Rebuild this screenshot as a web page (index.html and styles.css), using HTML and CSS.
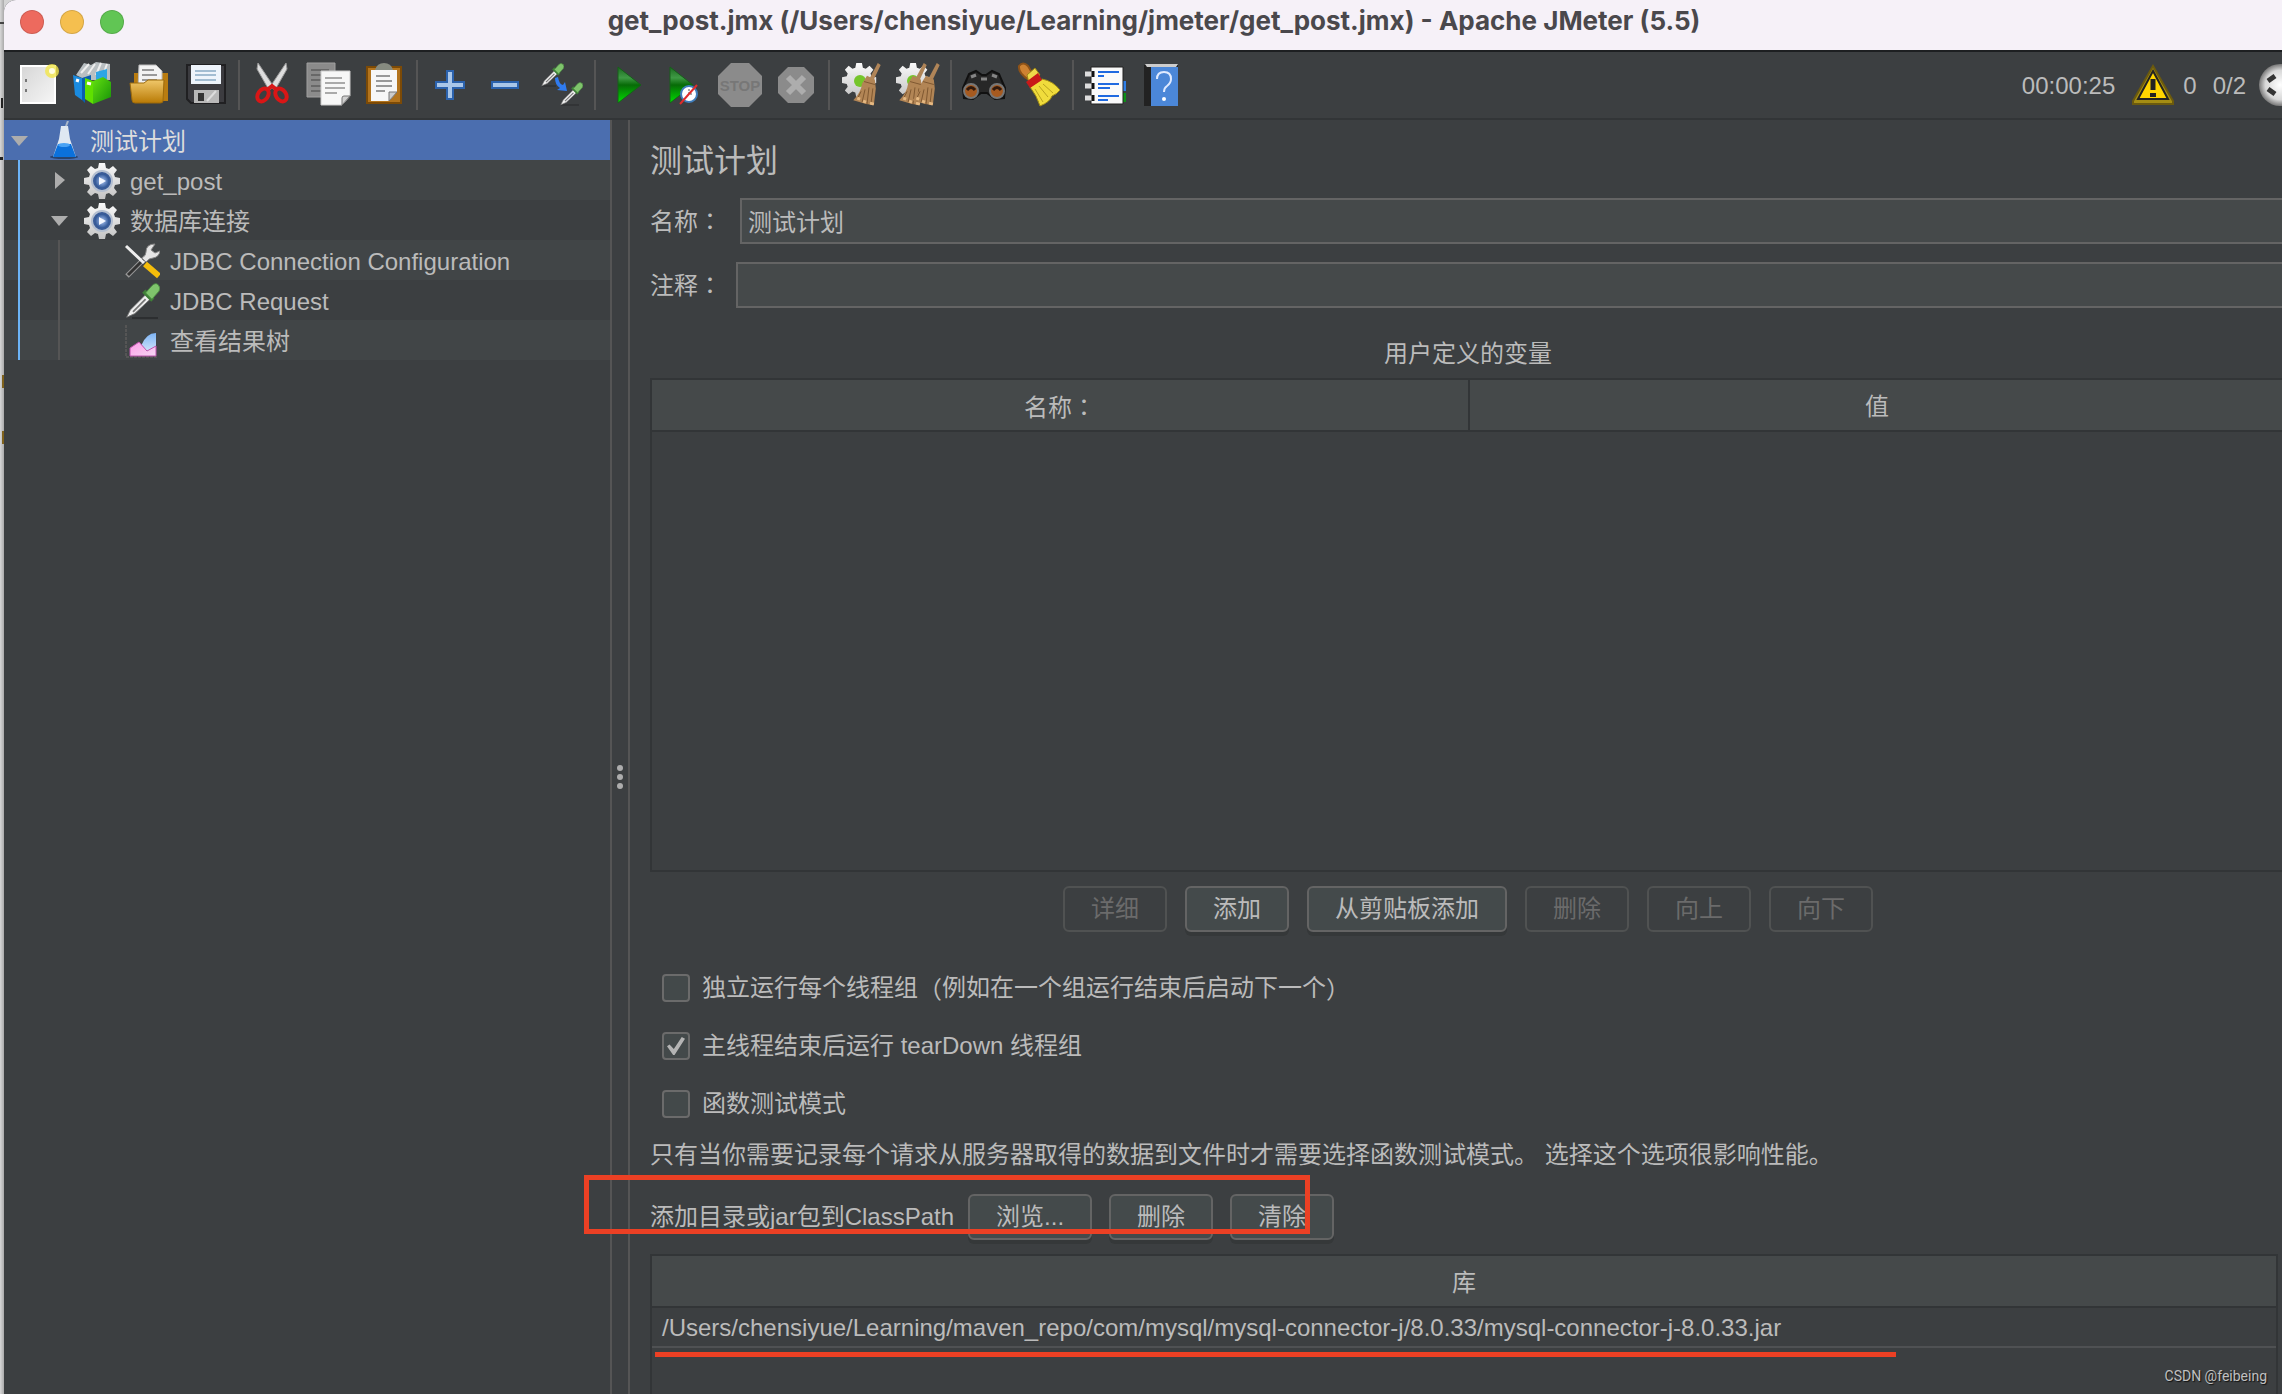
FILE: index.html
```html
<!DOCTYPE html>
<html lang="zh-CN">
<head>
<meta charset="utf-8">
<title>get_post.jmx - Apache JMeter (5.5)</title>
<link rel="stylesheet" href="styles.css">
</head>
<body>
<svg class="defs" width="0" height="0" aria-hidden="true">
  <defs>
    <linearGradient id="gGold" x1="0" y1="0" x2="0" y2="1"><stop offset="0" stop-color="#f0c86a"/><stop offset="1" stop-color="#b97a05"/></linearGradient>
    <linearGradient id="gPaper" x1="0" y1="0" x2="1" y2="1"><stop offset="0" stop-color="#d6d6d6"/><stop offset="1" stop-color="#f6f6f6"/></linearGradient>
    <linearGradient id="gPlay" x1="0" y1="0" x2="0" y2="1"><stop offset="0" stop-color="#1c6a20"/><stop offset=".3" stop-color="#3f9a45"/><stop offset=".5" stop-color="#076b07"/><stop offset="1" stop-color="#00e000"/></linearGradient>
    <linearGradient id="gGreen" x1="0" y1="0" x2="1" y2="1"><stop offset="0" stop-color="#63e010"/><stop offset="1" stop-color="#169208"/></linearGradient>
    <radialGradient id="gBlue"><stop offset="0" stop-color="#e8f0ff"/><stop offset=".35" stop-color="#7c9bd0"/><stop offset="1" stop-color="#1f4788"/></radialGradient>
    <radialGradient id="gBall"><stop offset="0" stop-color="#fff"/><stop offset=".7" stop-color="#d8d8d8"/><stop offset="1" stop-color="#777"/></radialGradient>
    <linearGradient id="gMetal" x1="0" y1="0" x2="0" y2="1"><stop offset="0" stop-color="#fafafa"/><stop offset="1" stop-color="#c4c4c4"/></linearGradient>
    <linearGradient id="gPink" x1="0" y1="0" x2="1" y2="1"><stop offset="0" stop-color="#ff9be8"/><stop offset="1" stop-color="#f5d8f4"/></linearGradient>
    <linearGradient id="gSky" x1="0" y1="0" x2="0" y2="1"><stop offset="0" stop-color="#7db4f5"/><stop offset="1" stop-color="#e4effb"/></linearGradient>
    <g id="gearShape">
      <path d="M15 0h6l1 5 3 1 4-3 4 4-3 4 1 3 5 1v6l-5 1-1 3 3 4-4 4-4-3-3 1-1 5h-6l-1-5-3-1-4 3-4-4 3-4-1-3-5-1v-6l5-1 1-3-3-4 4-4 4 3 3-1z" fill="url(#gMetal)"/>
    </g>
    <symbol id="gear" viewBox="0 0 36 36"><use href="#gearShape"/><circle cx="18" cy="18" r="11" fill="#b4bfd0"/><circle cx="18" cy="18" r="8" fill="url(#gBlue)" stroke="#3a5c98" stroke-width="2"/><path d="M15 14l7 4-7 4z" fill="#f4f7ff"/></symbol>
    <symbol id="pipette" viewBox="0 0 40 40"><path d="M3 38L7 30 24 13 29 18 12 34Z" fill="#f0f0f0" stroke="#777" stroke-width="1"/><path d="M10 32L24 18" stroke="#777" stroke-width="2"/><path d="M22 9l10 10" stroke="#3f7e38" stroke-width="5"/><path d="M24 11L31 3q4-4 7-1t1 7L31 18z" fill="#7fc46c" stroke="#4b8e42"/></symbol>
    <symbol id="broom" viewBox="0 0 30 46"><path d="M26 1l3 2-7 15-4-2z" fill="#b08558"/><path d="M15 14l8 4 1 9-2 17-8-1-13-4q8-8 9-17z" fill="#b28555"/><path d="M12 20l11 3M9 30L5 38M13 28l-3 13M17 26l-2 17M21 27l-2 16" stroke="#7e5730" stroke-width="1" fill="none"/><path d="M5 37l3 1M11 40l3 1M18 42l4 1" stroke="#e6b982" stroke-width="3"/></symbol>
  </defs>
</svg>

<div class="desktop">
  <div class="behind"></div>
  <div class="window">
    <header class="titlebar">
      <div class="lights"><i class="light red"></i><i class="light yellow"></i><i class="light green"></i></div>
      <h1>get_post.jmx (/Users/chensiyue/Learning/jmeter/get_post.jmx) - Apache JMeter (5.5)</h1>
    </header>

    <nav class="toolbar" aria-label="工具栏">
      <button class="tool" aria-label="新建"><svg width="44" height="48" viewBox="0 0 44 48"><path d="M5 5h34v37H5z" fill="url(#gPaper)" stroke="#fff" stroke-width="2"/><path d="M10 18v3M10 28v3" stroke="#777" stroke-width="2"/><circle cx="36" cy="10" r="7" fill="#f2e64a" opacity=".8"/><circle cx="36" cy="10" r="3" fill="#fffde0"/></svg></button>
      <button class="tool" aria-label="模板"><svg width="44" height="48" viewBox="0 0 44 48"><path d="M4 14L12 2l7 2 5-3 14 2v16H14z" fill="#b9bfc2"/><path d="M9 12l8-9M16 13l7-10M24 14l5-12M31 14l4-11" stroke="#eee" stroke-width="2"/><path d="M1 14l9 3v22l-7-5z" fill="#1a8be0"/><path d="M10 17l9-3v6l-6-2v24l-3-3z" fill="#0a5fae"/><path d="M24 11l11-3v10l-11 2z" fill="#2da6e6"/><path d="M13 17l8 3v23l-8-5z" fill="#5fe000"/><path d="M21 20l10-4 8 5v15l-18 7z" fill="url(#gGreen)"/><path d="M4 19l3 1M15 22l4 1" stroke="#fff" stroke-width="3"/></svg></button>
      <button class="tool" aria-label="打开"><svg width="44" height="48" viewBox="0 0 44 48"><path d="M6 12h34v28H6z" fill="#b97c10"/><path d="M11 4h17l6 6v18H10z" fill="#f3f3f3" stroke="#bbb"/><path d="M14 9h12M14 14h15M14 19h15" stroke="#999" stroke-width="2"/><path d="M2 22h14l4-3h16l-1 21q0 2-3 2H7q-3 0-3-3z" fill="url(#gGold)" stroke="#9c6a0b"/></svg></button>
      <button class="tool" aria-label="保存"><svg width="44" height="48" viewBox="0 0 44 48"><path d="M3 4h38v38H7l-4-4z" fill="#3c3c40" stroke="#202022" stroke-width="2"/><path d="M7 4h30v19H7z" fill="#eef4fb"/><path d="M11 10h21M11 14h21M11 19h21" stroke="#a3bdd2" stroke-width="2"/><path d="M10 29h25v13H10z" fill="#b9b9b9"/><path d="M14 32h6v8h-6z" fill="#333"/><path d="M23 40l9-10" stroke="#ddd" stroke-width="2"/></svg></button>
      <span class="sep"></span>
      <button class="tool" aria-label="剪切"><svg width="44" height="48" viewBox="0 0 44 48"><path d="M8 2l16 24-5 3L7 8zM36 2L20 26l5 3L37 8z" fill="#dedede" stroke="#999"/><path d="M17 29l5-4 5 4" fill="none" stroke="#d81818" stroke-width="4"/><ellipse cx="13" cy="34" rx="5" ry="7" transform="rotate(35 13 34)" fill="none" stroke="#d91616" stroke-width="4"/><ellipse cx="31" cy="34" rx="5" ry="7" transform="rotate(-35 31 34)" fill="none" stroke="#d91616" stroke-width="4"/></svg></button>
      <button class="tool" aria-label="复制"><svg width="48" height="48" viewBox="0 0 48 48"><path d="M3 2h28v34H3z" fill="#8b8b8b" stroke="#a0a0a0"/><path d="M7 9h18M7 14h18M7 19h12M7 25h12M7 30h10" stroke="#686868" stroke-width="2"/><path d="M17 10h29v25l-8 9H17z" fill="#f7f7f7" stroke="#ccc"/><path d="M46 35l-8 9v-7q0-2 2-2z" fill="#d0d0d0" stroke="#777"/><path d="M21 17h17M21 22h20M21 27h20M21 32h12" stroke="#aaa" stroke-width="2"/></svg></button>
      <button class="tool" aria-label="粘贴"><svg width="44" height="48" viewBox="0 0 44 48"><path d="M5 6h34v36H5z" fill="#b3741d" stroke="#7c4a06" stroke-width="2"/><path d="M9 9h26v22l-8 9H9z" fill="#f7f7f7"/><path d="M35 31l-8 9v-9z" fill="#ccc" stroke="#777"/><path d="M13 9q2-7 9-7t9 7z" fill="#868b80"/><path d="M14 15h14M14 20h16M14 25h16M14 30h9" stroke="#999" stroke-width="2"/></svg></button>
      <span class="sep"></span>
      <button class="tool" aria-label="展开全部"><svg width="44" height="48" viewBox="0 0 44 48"><path d="M19 10h6v11h11v6H25v11h-6V27H8v-6h11z" fill="#a9c6e8" stroke="#2b62ad" stroke-width="2"/></svg></button>
      <button class="tool" aria-label="折叠全部"><svg width="44" height="48" viewBox="0 0 44 48"><path d="M8 21h26v6H8z" fill="#a9c6e8" stroke="#2b62ad" stroke-width="2"/></svg></button>
      <button class="tool" aria-label="切换"><svg width="46" height="48" viewBox="0 0 46 48"><path d="M3 25h14M22 44h18" stroke="#292b2c" stroke-width="1"/><use href="#pipette" x="1" y="2" width="24" height="24"/><use href="#pipette" x="20" y="21" width="24" height="24"/><path d="M16 17l3-1q1 7 5 8l2-3 2 9-10-1 3-2q-5-3-5-10z" fill="#2f7bf0"/></svg></button>
      <span class="sep"></span>
      <button class="tool" aria-label="启动"><svg width="44" height="48" viewBox="0 0 44 48"><path d="M12 6l23 18-23 18z" fill="url(#gPlay)" stroke="#16601a"/></svg></button>
      <button class="tool" aria-label="不停顿开始"><svg width="44" height="48" viewBox="0 0 44 48"><path d="M8 6l23 18L8 42z" fill="url(#gPlay)" stroke="#16601a"/><circle cx="27" cy="33" r="8" fill="#fff" stroke="#3f7dbb" stroke-width="2"/><path d="M27 28v5h4" stroke="#555" fill="none" stroke-dasharray="2 1"/><path d="M18 43l17-19" stroke="#e02c2c" stroke-width="2"/></svg></button>
      <button class="tool" aria-label="停止" disabled><svg width="44" height="48" viewBox="0 0 44 48"><path d="M13 2h18l13 13v18L31 46H13L0 33V15z" fill="#8b8b8b"/><text x="22" y="30" class="stop">STOP</text></svg></button>
      <button class="tool" aria-label="关闭" disabled><svg width="44" height="48" viewBox="0 0 44 48"><path d="M14 6h16l10 10v16L30 42H14L4 32V16z" fill="#8b8b8b"/><path d="M14 16l16 16M30 16L14 32" stroke="#adadad" stroke-width="6"/></svg></button>
      <span class="sep"></span>
      <button class="tool" aria-label="清除"><svg width="46" height="48" viewBox="0 0 46 48"><use href="#gearShape" transform="translate(3 2) scale(.95)"/><circle cx="21" cy="20" r="6" fill="#75c52a"/><use href="#broom" x="13" y="1" width="30" height="45"/></svg></button>
      <button class="tool" aria-label="清除全部"><svg width="46" height="48" viewBox="0 0 46 48"><use href="#gearShape" transform="translate(1 2) scale(.95)"/><circle cx="18" cy="20" r="6" fill="#75c52a"/><use href="#broom" x="3" y="1" width="30" height="45"/><use href="#broom" x="16" y="1" width="30" height="45"/></svg></button>
      <span class="sep"></span>
      <button class="tool" aria-label="查找"><svg width="46" height="48" viewBox="0 0 46 48"><path d="M8 13l7-3 6 4h4l6-4 7 3 6 14-1 10-9 1-8-6h-6l-8 6-9-1-1-10z" fill="#272727" stroke="#111" stroke-width="2"/><path d="M10 16l5-2M31 14l5 2M20 18h6" stroke="#858585" stroke-width="3"/><circle cx="10" cy="30" r="7" fill="#a65a20" stroke="#777" stroke-width="2"/><circle cx="36" cy="30" r="7" fill="#a65a20" stroke="#777" stroke-width="2"/><path d="M6 29q4-5 8 0M32 29q4-5 8 0" stroke="#31190c" stroke-width="3" fill="none"/></svg></button>
      <button class="tool" aria-label="清除查找"><svg width="46" height="48" viewBox="0 0 46 48"><path d="M2 5q4-5 9 0l6 10-5 4Q1 12 2 5z" fill="#ce8232" stroke="#8d5218" stroke-width="2"/><path d="M10 14l8-7 5 7-11 8z" fill="#efd94a" stroke="#9c8614"/><path d="M13 26l12-8q11 2 18 11-3 4-8 6-2 6-12 10-3-10-10-19z" fill="#f0dc3c" stroke="#a08c16"/><path d="M9 21l12-9 4 7-12 8z" fill="#c81919"/><path d="M18 28l8 13M22 25l9 11M26 23l10 9" stroke="#b9a31f" stroke-width="1"/></svg></button>
      <span class="sep"></span>
      <button class="tool" aria-label="函数助手"><svg width="46" height="48" viewBox="0 0 46 48"><path d="M38 20h5v10h-5z" fill="#2f7fe8"/><path d="M38 32h5v9h-5z" fill="#0c8f17"/><path d="M8 6h32v37H8z" fill="#f9f9f9" stroke="#222"/><path d="M15 11h21M15 15h6M15 23h21M15 27h12M15 35h21M15 39h10" stroke="#1e69e0" stroke-width="2"/><path d="M2 13h7M2 25h7M2 37h7" stroke="#ddd" stroke-width="5"/><path d="M10 10v6M10 22v6M10 34v6" stroke="#111" stroke-width="3"/></svg></button>
      <button class="tool" aria-label="帮助"><svg width="44" height="48" viewBox="0 0 44 48"><path d="M4 4h34v41H4z" fill="#222"/><path d="M5 3h33l-2 3H7z" fill="#ccc"/><path d="M11 6h27v39H11z" fill="#4b87d8"/><path d="M17 18q0-7 7-7t7 7q0 4-4 7-3 2-3 6" fill="none" stroke="#dfeaff" stroke-width="2"/><circle cx="24" cy="38" r="2" fill="#fff"/></svg></button>

      <div class="status">
        <span class="clock">00:00:25</span>
        <svg width="44" height="48" viewBox="0 0 44 48"><path d="M22 4L42 39v3H2v-3z" fill="#a48d13" stroke="#6b5a0e" stroke-width="2"/><path d="M22 9L37 37H7z" fill="#ffd500" stroke="#222" stroke-width="2"/><path d="M22 17v11" stroke="#222" stroke-width="5"/><path d="M19 31h6v4h-6z" fill="#222"/></svg>
        <span class="errors">0</span>
        <span>0/2</span>
        <svg class="ball" width="44" height="48" viewBox="0 0 44 48"><circle cx="22" cy="23" r="21" fill="url(#gBall)"/><path d="M10 19l7-5M10 27l7 5" stroke="#333" stroke-width="5"/></svg>
      </div>
    </nav>

    <div class="content">
      <aside class="tree">
        <div class="row selected"><i class="arrow"><svg width="20" height="12"><path d="M1 1h17L9 11z"/></svg></i><svg class="ico" width="36" height="40" viewBox="0 0 36 40"><ellipse cx="16" cy="36" rx="14" ry="2" fill="#28446f"/><path d="M13 5h7l2 13 6 18H5l6-18z" fill="#dfe8f2"/><path d="M10 23h13l5 13H5z" fill="#0b71dc"/><ellipse cx="16" cy="24" rx="6" ry="2" fill="#49a2f4"/><path d="M18 5l2-5" stroke="#a9b7c9" stroke-width="2"/></svg><span>测试计划</span></div>
        <div class="row l1 alt"><i class="arrow"><svg width="12" height="20"><path d="M1 1v17l10-9z"/></svg></i><svg class="ico" width="36" height="36"><use href="#gear"/></svg><span>get_post</span></div>
        <div class="row l1"><i class="arrow"><svg width="20" height="12"><path d="M1 1h17L9 11z"/></svg></i><svg class="ico" width="36" height="36"><use href="#gear"/></svg><span>数据库连接</span></div>
        <div class="row l2 alt"><svg class="ico" width="36" height="36" viewBox="0 0 36 36"><path d="M3 33L22 14" stroke="#999" stroke-width="5"/><path d="M4 32L21 15" stroke="#333" stroke-width="3"/><path d="M31 1q-9 0-9 8 0 4-4 6l4 4q3-4 7-4 6-1 7-7l-5 2-4-3z" fill="#e5e5e5" stroke="#888"/><path d="M2 3l18 17" stroke="#eee" stroke-width="3"/><path d="M21 21l14 12" stroke="#f5bd0b" stroke-width="6"/></svg><span>JDBC Connection Configuration</span></div>
        <div class="row l2"><svg class="ico" width="36" height="36"><path d="M8 35h26" stroke="#2c2e30" stroke-width="2"/><use href="#pipette"/></svg><span>JDBC Request</span></div>
        <div class="row l2 alt"><svg class="ico" width="36" height="36" viewBox="0 0 36 36"><path d="M2 2v32h32" stroke="#555" stroke-width="2" fill="none" stroke-dasharray="3 1"/><path d="M17 23q5-13 15-13v23H20z" fill="url(#gSky)"/><path d="M6 33v-8l9-6 8 9 9-5v10z" fill="url(#gPink)" stroke="#bd55ae"/></svg><span>查看结果树</span></div>
      </aside>
      <div class="splitter"><i></i><i></i><i></i></div>

      <main class="panel">
        <div class="bleed">
          <h2>测试计划</h2>
          <div class="field name"><label for="name">名称<span class="wide" lang="zh-TW">：</span></label><input id="name" type="text" value="测试计划"></div>
          <div class="field"><label for="comment">注释<span class="wide" lang="zh-TW">：</span></label><input id="comment" type="text"></div>
          <table class="vars">
            <caption>用户定义的变量</caption>
            <thead><tr><th>名称<span class="wide" lang="zh-TW">：</span></th><th>值</th></tr></thead>
            <tbody><tr><td></td><td></td></tr></tbody>
          </table>
          <div class="actions">
            <button class="btn" disabled>详细</button><button class="btn">添加</button><button class="btn">从剪贴板添加</button><button class="btn" disabled>删除</button><button class="btn" disabled>向上</button><button class="btn" disabled>向下</button>
          </div>
        </div>
        <div class="checks">
          <label><input type="checkbox">独立运行每个线程组<span class="wide" lang="zh-TW">（</span>例如在一个组运行结束后启动下一个<span class="wide" lang="zh-TW">）</span></label>
          <label><input type="checkbox" checked>主线程结束后运行 tearDown 线程组</label>
          <label><input type="checkbox">函数测试模式</label>
        </div>
        <p class="note">只有当你需要记录每个请求从服务器取得的数据到文件时才需要选择函数测试模式。 选择这个选项很影响性能。</p>
        <div class="classpath">
          <span>添加目录或jar包到ClassPath</span>
          <div class="group"><button class="btn">浏览...</button><button class="btn">删除</button><button class="btn">清除</button></div>
          <i class="mark-box"></i>
        </div>
        <div class="libs">
          <table>
            <thead><tr><th>库</th></tr></thead>
            <tbody><tr><td>/Users/chensiyue/Learning/maven_repo/com/mysql/mysql-connector-j/8.0.33/mysql-connector-j-8.0.33.jar</td></tr></tbody>
          </table>
          <i class="mark-line"></i>
        </div>
      </main>
    </div>
  </div>
  <div class="watermark">CSDN @feibeing</div>
</div>
</body>
</html>
```

FILE: styles.css
```css
* { box-sizing: border-box; }
body {
  margin: 0;
  color: #bbb;
  background: #3c3f41;
  font: 24px/28px "Liberation Sans", "Noto Sans CJK SC", sans-serif;
}
button, input { font: inherit; color: inherit; }
.defs { position: absolute; }
.wide { font-family: "Noto Sans CJK TC", sans-serif; }

.desktop { position: relative; display: flex; height: 100vh; overflow: hidden; background: #d4d4d4; }
.behind {
  flex: none; width: 4px;
  background:
    linear-gradient(#444, #444) 0 22px / 4px 2px no-repeat,
    linear-gradient(#222, #222) 1px 98px / 2px 10px no-repeat,
    linear-gradient(#222, #222) 0 157px / 3px 3px no-repeat,
    linear-gradient(#80621c, #80621c) 2px 375px / 2px 13px no-repeat,
    linear-gradient(#80621c, #80621c) 2px 431px / 2px 13px no-repeat,
    linear-gradient(90deg, #d8d8d8, #aaa);
}
.window { flex: 1; min-width: 0; display: flex; flex-direction: column; background: #3c3f41; border-top-left-radius: 12px; overflow: hidden; }

.titlebar { position: relative; flex: none; height: 52px; padding: 6px 0; background: #f6f1f8; border-bottom: 2px solid #1d1f21; }
.titlebar h1 { margin: 0; padding-left: 22px; text-align: center; white-space: nowrap; color: #4a484c; font: bold 26px/30px Inter, sans-serif; }
.lights { position: absolute; left: 16px; top: 10px; display: flex; gap: 16px; }
.light { width: 24px; height: 24px; border-radius: 50%; border: 1px solid #0002; }
.red { background: #ed6a5e; }
.yellow { background: #f5bf4f; }
.green { background: #61c554; }

.toolbar { flex: none; display: flex; align-items: center; height: 68px; padding-left: 6px; border-bottom: 2px solid #323537; overflow: hidden; }
.tool { flex: none; display: flex; justify-content: center; width: 56px; padding: 0; border: 0; background: none; }
.tool svg { flex: none; }
.sep { flex: none; width: 2px; height: 50px; margin: 0 4px; background: #555; }
.stop { fill: #777; font: bold 15px "Liberation Sans", sans-serif; text-anchor: middle; }
.status { margin-left: auto; margin-right: -20px; padding-top: 2px; display: flex; align-items: center; white-space: nowrap; }
.clock { margin-right: 16px; }
.errors { margin: 0 16px 0 8px; }
.ball { margin-left: 12px; }

.content { flex: 1; min-height: 0; display: flex; }
.tree { flex: none; width: 606px; position: relative; }
.tree::before { content: ""; position: absolute; z-index: 1; left: 14px; top: 40px; width: 2px; height: 200px; background: #6cb4f7; }
.row { display: flex; align-items: center; height: 40px; padding: 2px 0 0 4px; white-space: nowrap; }
.row span { padding-top: 2px; }
.row.alt { background-color: #414547; }
.row.selected { background-color: #4b6eaf; color: #ddd; }
.l1 { padding-left: 44px; }
.l2 { padding-left: 120px; background-image: linear-gradient(#555, #555); background-size: 2px 40px; background-position: 54px 0; background-repeat: no-repeat; }
.arrow { display: flex; justify-content: center; width: 24px; margin-right: 12px; }
.arrow path { fill: #adadad; }
.ico { flex: none; margin-right: 10px; }
.selected .ico { margin: 0 6px 0 4px; }

.splitter { flex: none; width: 20px; border: solid #555; border-width: 0 2px; display: flex; flex-direction: column; align-items: center; justify-content: center; gap: 3px; padding-top: 40px; }
.splitter i { width: 6px; height: 6px; border-radius: 50%; background: #adadad; }

.panel { flex: 1; min-width: 0; padding: 20px 4px 0 20px; display: flex; flex-direction: column; }
.bleed { margin-right: -8px; }
h2 { margin: 0; padding-bottom: 4px; font: 32px/36px "Noto Sans CJK SC", sans-serif; }
.field { display: flex; align-items: center; gap: 14px; margin-top: 18px; }
.field.name { gap: 18px; }
.field input { flex: 1; min-width: 0; height: 46px; padding: 0 6px 2px; background: #45494a; border: 2px solid #646464; outline: 0; }

table { width: 100%; border-spacing: 0; table-layout: fixed; border: 2px solid #323537; }
th { height: 52px; padding: 4px 0 0; font-weight: normal; background: #45494a; border-bottom: 2px solid #323537; }
th + th { border-left: 2px solid #323537; }
td { padding: 0; }
.vars { margin-top: 28px; }
.vars caption { padding: 4px 0 10px; }
.vars td { height: 438px; }

.actions { display: flex; justify-content: center; gap: 18px; margin-top: 14px; }
.btn { height: 46px; padding: 0 26px; background: #444a4b; border: 2px solid #646464; border-radius: 6px; box-shadow: 0 4px 0 #353839; white-space: nowrap; }
.btn:disabled { color: #6b6b6b; background: none; border-color: #505252; box-shadow: none; }

.checks { display: flex; flex-direction: column; gap: 30px; margin-top: 42px; padding-left: 12px; }
.checks label { display: flex; align-items: center; height: 28px; white-space: pre; }
.checks input { appearance: none; flex: none; display: grid; place-items: center; width: 28px; height: 28px; margin: 0 12px 0 0; background: #43494a; border: 2px solid #6b6b6b; border-radius: 4px; }
.checks input:checked::before { content: ""; width: 18px; height: 18px; background: #b4b4b4; clip-path: polygon(0 52%, 14% 42%, 38% 66%, 82% 0, 100% 10%, 42% 100%, 34% 100%); }
.note { margin: 22px 0 0; line-height: 30px; white-space: nowrap; }

.classpath { position: relative; display: flex; align-items: center; gap: 14px; margin-top: 24px; white-space: nowrap; }
.group { display: flex; gap: 17px; }
.mark-box { position: absolute; left: -66px; top: -19px; width: 726px; height: 59px; border: 5px solid #ec4024; }

.libs { position: relative; flex: 1; margin-top: 14px; display: flex; flex-direction: column; border: 2px solid #323537; border-bottom: 0; }
.libs table { border: 0; }
.libs td { height: 40px; padding: 2px 0 0 10px; border-bottom: 2px solid #4f5153; white-space: nowrap; }
.mark-line { position: absolute; left: 3px; top: 96px; width: 1241px; height: 5px; background: #ec4024; }
.watermark { position: absolute; right: 15px; bottom: 9px; color: #c0c0c0; font: 14px/18px Roboto, sans-serif; text-shadow: 1px 1px 1px #111; }
```
